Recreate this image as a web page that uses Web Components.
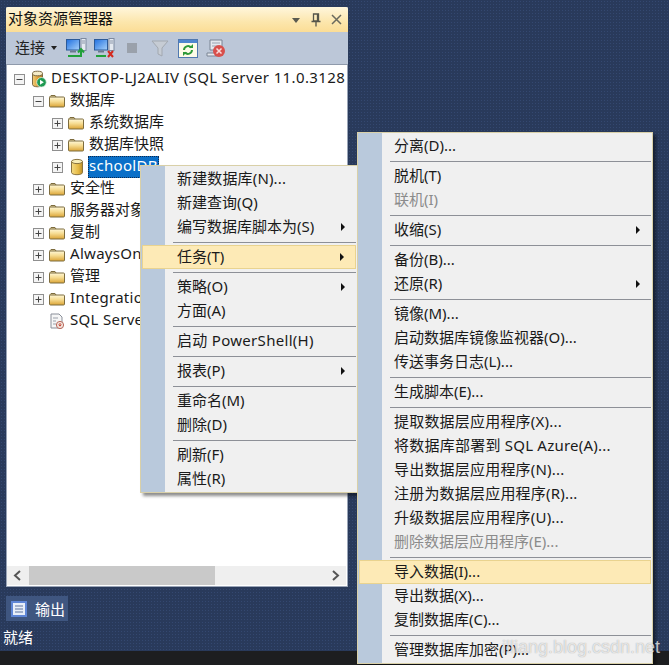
<!DOCTYPE html>
<html>
<head>
<meta charset="utf-8">
<style>
  html, body { margin: 0; height: 100%; overflow: hidden; }
  body {
    font: 15px "Noto Sans", "Noto Sans CJK SC", sans-serif;
    background-color: #2a3b5c;
  }
</style>
</head>
<body>
<ssms-window>
  <explorer-panel slot="panel">
    <tree-row icon="server" toggle="minus" level="0" style="--ls:.39px">DESKTOP-LJ2ALIV (SQL Server 11.0.3128</tree-row>
    <tree-row icon="folder" toggle="minus" level="1">数据库</tree-row>
    <tree-row icon="folder" toggle="plus" level="2">系统数据库</tree-row>
    <tree-row icon="folder" toggle="plus" level="2">数据库快照</tree-row>
    <tree-row icon="db" toggle="plus" level="2" selected style="--ls:.3px">schoolDB</tree-row>
    <tree-row icon="folder" toggle="plus" level="1">安全性</tree-row>
    <tree-row icon="folder" toggle="plus" level="1" style="--w:70px">服务器对象</tree-row>
    <tree-row icon="folder" toggle="plus" level="1">复制</tree-row>
    <tree-row icon="folder" toggle="plus" level="1" style="--ls:.3px">AlwaysOn</tree-row>
    <tree-row icon="folder" toggle="plus" level="1">管理</tree-row>
    <tree-row icon="folder" toggle="plus" level="1" style="--ls:.3px">Integratio</tree-row>
    <tree-row icon="agent" level="1" style="--ls:.3px">SQL Serve</tree-row>
  </explorer-panel>

  <ctx-menu slot="menus" style="left:140px;top:165px;width:218px">
    <menu-item style="--ls:.15px">新建数据库(N)...</menu-item>
    <menu-item>新建查询(Q)</menu-item>
    <menu-item arrow>编写数据库脚本为(S)</menu-item>
    <menu-sep></menu-sep>
    <menu-item arrow active>任务(T)</menu-item>
    <menu-sep></menu-sep>
    <menu-item arrow>策略(O)</menu-item>
    <menu-item>方面(A)</menu-item>
    <menu-sep></menu-sep>
    <menu-item style="--ls:.3px">启动 PowerShell(H)</menu-item>
    <menu-sep></menu-sep>
    <menu-item arrow>报表(P)</menu-item>
    <menu-sep></menu-sep>
    <menu-item>重命名(M)</menu-item>
    <menu-item>删除(D)</menu-item>
    <menu-sep></menu-sep>
    <menu-item>刷新(F)</menu-item>
    <menu-item>属性(R)</menu-item>
  </ctx-menu>

  <ctx-menu slot="menus" style="left:357px;top:132px;width:296px">
    <menu-item>分离(D)...</menu-item>
    <menu-sep></menu-sep>
    <menu-item>脱机(T)</menu-item>
    <menu-item disabled>联机(I)</menu-item>
    <menu-sep></menu-sep>
    <menu-item arrow>收缩(S)</menu-item>
    <menu-sep></menu-sep>
    <menu-item>备份(B)...</menu-item>
    <menu-item arrow>还原(R)</menu-item>
    <menu-sep></menu-sep>
    <menu-item>镜像(M)...</menu-item>
    <menu-item>启动数据库镜像监视器(O)...</menu-item>
    <menu-item>传送事务日志(L)...</menu-item>
    <menu-sep></menu-sep>
    <menu-item>生成脚本(E)...</menu-item>
    <menu-sep></menu-sep>
    <menu-item style="--ls:.2px">提取数据层应用程序(X)...</menu-item>
    <menu-item style="--ls:.23px">将数据库部署到 SQL Azure(A)...</menu-item>
    <menu-item style="--ls:.2px">导出数据层应用程序(N)...</menu-item>
    <menu-item style="--ls:.2px">注册为数据层应用程序(R)...</menu-item>
    <menu-item style="--ls:.2px">升级数据层应用程序(U)...</menu-item>
    <menu-item disabled>删除数据层应用程序(E)...</menu-item>
    <menu-sep></menu-sep>
    <menu-item active>导入数据(I)...</menu-item>
    <menu-item>导出数据(X)...</menu-item>
    <menu-item>复制数据库(C)...</menu-item>
    <menu-sep></menu-sep>
    <menu-item>管理数据库加密(P)...</menu-item>
  </ctx-menu>
</ssms-window>

<script>
const ICONS = {
  folder: `<svg width="16" height="14" viewBox="0 0 16 14"><defs><linearGradient id="fg" x1="0" y1="0" x2="0" y2="1"><stop offset="0" stop-color="#fff8d8"/><stop offset=".45" stop-color="#f6dc92"/><stop offset="1" stop-color="#dba436"/></linearGradient></defs><path d="M1 4V2.500l1-1h4l1 1.500" fill="#e9d9a8" stroke="#7d6c3e"/><rect x=".5" y="3" width="15" height="10" rx="1" fill="url(#fg)" stroke="#7d6c3e"/></svg>`,
  server: `<svg width="16" height="18" viewBox="0 0 16 18" style="margin-left:1px"><defs><linearGradient id="sg" x1="0" y1="0" x2="1" y2="0"><stop offset="0" stop-color="#f0cf7c"/><stop offset=".5" stop-color="#e0a23a"/><stop offset="1" stop-color="#b87a20"/></linearGradient></defs><path d="M1.500 3.500v11c0 1.400 2.400 2.300 5 2.300s5-.9 5-2.300v-11z" fill="url(#sg)" stroke="#7c6a45"/><ellipse cx="6.500" cy="3.500" rx="5" ry="2.300" fill="#f5ecc8" stroke="#7c6a45"/><circle cx="10.500" cy="12.300" r="4.800" fill="#1f9a52" stroke="#e6f4ea" stroke-width=".8"/><path d="M9 9.800l3.800 2.500L9 14.800z" fill="#fff"/></svg>`,
  db: `<svg width="14" height="18" viewBox="0 0 14 18" style="margin-left:2px"><defs><linearGradient id="dg" x1="0" y1="0" x2="1" y2="0"><stop offset="0" stop-color="#f4dc86"/><stop offset=".6" stop-color="#e7bb46"/><stop offset="1" stop-color="#bb8e28"/></linearGradient></defs><path d="M1.500 3.500v11c0 1.300 2.400 2.200 5.500 2.200s5.500-.9 5.500-2.200v-11z" fill="url(#dg)" stroke="#8a7440"/><ellipse cx="7" cy="3.500" rx="5.500" ry="2.100" fill="#f8eeb9" stroke="#8a7440"/></svg>`,
  agent: `<svg width="16" height="17" viewBox="0 0 16 17"><path d="M2 1h8l3 3v11H2z" fill="#f6f6f6" stroke="#8a8f99"/><path d="M4 5h5M4 8h3M4 11h3" stroke="#9aa0aa"/><circle cx="11" cy="12" r="3.600" fill="#f3e9e2" stroke="#b9675a"/><path d="M11 10v2.600M9.600 11.600l1.400 1.600 1.400-1.600" stroke="#c2402f" fill="none"/></svg>`
};

const MONITOR = `<defs><linearGradient id="mg" x1="0" y1="0" x2="1" y2="1"><stop offset="0" stop-color="#1f6fe0"/><stop offset="1" stop-color="#a8d2fa"/></linearGradient></defs><rect x=".5" y="1.500" width="13" height="10.500" fill="url(#mg)" stroke="#2c5a98"/><rect x="15" y=".5" width="5" height="12" fill="#e4e9f0" stroke="#7d8aa0"/><path d="M16 3h3M16 5h3" stroke="#8a96aa"/><path d="M4 12.500h6v2H4z" fill="#6c7a90"/>`;

class SsmsWindow extends HTMLElement {
  constructor() {
    super();
    this.attachShadow({ mode: "open" }).innerHTML = `
    <style>
      :host {
        display: flex;
        flex-direction: column;
        position: relative;
        width: 669px;
        height: 665px;
        color: #fff;
        background-color: #293a5b;
        background-image: radial-gradient(#344870 0.7px, transparent 0.8px);
        background-size: 3px 3px;
        overflow: hidden;
      }
      .main { padding: 7px 0 0 6px; height: 580px; }
      .tab {
        display: flex;
        align-items: center;
        gap: 8px;
        box-sizing: border-box;
        width: 62px;
        height: 25px;
        margin: 9px 0 0 6px;
        padding-left: 5px;
        background: #3f5680;
      }
      .status { height: 24px; margin-top: 4px; padding-left: 3px; line-height: 24px; }
      .strip { flex: 1; margin-top: 2px; background: #1d1e20; }
      .mark {
        position: absolute;
        right: 9px;
        bottom: 7px;
        font: 18px "Liberation Sans", sans-serif;
        color: rgba(255, 255, 255, 0.72);
        text-shadow: 0 0 1px rgba(60, 60, 60, 0.5);
      }
    </style>
    <div class="main"><slot name="panel"></slot></div>
    <div class="tab">
      <svg width="16" height="16" viewBox="0 0 16 16"><rect width="16" height="16" fill="#5f86d6"/><rect x="2" y="2" width="12" height="12" fill="#e8eef8"/><path d="M4 5h8M4 8h8M4 11h8" stroke="#8a9cbc" stroke-width="1.400"/></svg>
      <span>输出</span>
    </div>
    <div class="status">就绪</div>
    <div class="strip"></div>
    <slot name="menus"></slot>
    <div class="mark">illiang.blog.csdn.net</div>
    `;
  }
}
customElements.define("ssms-window", SsmsWindow);

class ExplorerPanel extends HTMLElement {
  constructor() {
    super();
    this.attachShadow({ mode: "open" }).innerHTML = `
    <style>
      :host {
        display: flex;
        flex-direction: column;
        box-sizing: border-box;
        width: 342px;
        height: 580px;
        background: #fff;
        color: #1a1a1a;
        border-radius: 2px 2px 0 0;
        box-shadow: 0 0 0 1px #9aa5b8 inset;
      }
      .title {
        display: flex;
        align-items: center;
        height: 25px;
        padding: 0 6px 0 2px;
        background: linear-gradient(#fff6dc, #fce6ac 60%, #fbdd96);
        color: #111;
        border-radius: 2px 2px 0 0;
      }
      .title span { flex: 1; padding-bottom: 4px; }
      .title svg { margin-left: 10px; }
      .tools {
        display: flex;
        align-items: center;
        height: 33px;
        padding-left: 9px;
        background: #bcc7d8;
        border-bottom: 1px solid #8f9aab;
        box-sizing: border-box;
      }
      .tools .connect { width: 33px; color: #222; padding-bottom: 4px; }
      .tools .caret { width: 0; height: 0; border: 3.5px solid transparent; border-top: 4px solid #222; border-bottom: 0; margin: 0 9px 0 3px; }
      .tools svg { margin-right: 7px; flex: none; }
      .tree { flex: 1; padding: 3px 0 0 1px; overflow: hidden; }
      .scroll {
        display: flex;
        align-items: center;
        height: 19px;
        margin: 0 2px 2px 1px;
        background: #efefef;
      }
      .scroll svg { flex: none; width: 22px; }
      .thumb { width: 186px; height: 19px; background: #c9c9c9; }
      .gap { flex: 1; }
    </style>
    <div class="title">
      <span>对象资源管理器</span>
      <svg width="10" height="10" viewBox="0 0 10 10"><path d="M1 3h8L5 8z" fill="#5a5a50"/></svg>
      <svg width="10" height="14" viewBox="0 0 10 14"><path d="M2.500 1h5v7h-5zM.5 8.500h9M5 8.500V13.500M6.500 1v7" stroke="#55554a" stroke-width="1.300" fill="none"/></svg>
      <svg width="11" height="11" viewBox="0 0 11 11"><path d="M1 1l9 9M10 1l-9 9" stroke="#6a6a5e" stroke-width="1.500"/></svg>
    </div>
    <div class="tools">
      <span class="connect">连接</span><span class="caret"></span>
      <svg width="21" height="20" viewBox="0 0 21 20">${MONITOR}<path d="M2 18h13v-6M12 14.500l3-3.500 3 3.500" stroke="#22a03a" stroke-width="2" fill="none"/></svg>
      <svg width="21" height="20" viewBox="0 0 21 20">${MONITOR.replace(/mg/g, "mg2")}<path d="M2 18h10" stroke="#22a03a" stroke-width="2"/><path d="M14 13l5 6M19 13l-5 6" stroke="#d42a1e" stroke-width="2"/></svg>
      <svg width="12" height="12" viewBox="0 0 12 12" style="margin:0 13px 0 4px"><rect x="1" y="1" width="10" height="10" fill="#9aa1ab"/></svg>
      <svg width="18" height="18" viewBox="0 0 18 18" style="margin-right:9px"><path d="M1 2h16l-6 7v8l-4-2V9z" fill="#c6ccd4" stroke="#a2a8b0"/></svg>
      <svg width="20" height="19" viewBox="0 0 20 19"><rect x=".5" y=".5" width="19" height="18" fill="#fdfbe8" stroke="#4f78b0"/><rect x="1" y="1" width="18" height="3" fill="#4f86d0"/><path d="M6 11a4 4 0 0 1 7-2.500M14 11a4 4 0 0 1-7 2.500" stroke="#2f9a3a" stroke-width="2" fill="none"/><path d="M11 9h4V5zM9 13H5v4z" fill="#2f9a3a"/></svg>
      <svg width="21" height="20" viewBox="0 0 21 20"><path d="M5 2h12v10H5zM2 15h12v3H2z" fill="#e4e8ee" stroke="#7b8494"/><path d="M7 5h8M7 8h6" stroke="#9aa2b0"/><circle cx="14" cy="13" r="6" fill="#d8504c"/><path d="M11.500 10.500l5 5M16.500 10.500l-5 5" stroke="#fbdcdc" stroke-width="1.500"/></svg>
    </div>
    <div class="tree"><slot></slot></div>
    <div class="scroll">
      <svg height="13" viewBox="0 0 22 13"><path d="M13 2l-5 4.500 5 4.500" stroke="#555" stroke-width="2" fill="none"/></svg>
      <div class="thumb"></div>
      <div class="gap"></div>
      <svg height="13" viewBox="0 0 22 13"><path d="M9 2l5 4.500-5 4.500" stroke="#555" stroke-width="2" fill="none"/></svg>
    </div>
    `;
  }
}
customElements.define("explorer-panel", ExplorerPanel);

class TreeRow extends HTMLElement {
  constructor() {
    super();
    const toggle = this.getAttribute("toggle");
    const level = Number(this.getAttribute("level") || 0);
    const box = toggle ? `<svg width="11" height="11" viewBox="0 0 11 11"><rect x=".5" y=".5" width="10" height="10" fill="#f4f4f4" stroke="#8f8f8f"/><path d="M2.500 5.500h6${toggle === "plus" ? "M5.500 2.500v6" : ""}" stroke="#444"/></svg>` : "";
    this.attachShadow({ mode: "open" }).innerHTML = `
    <style>
      :host {
        display: flex;
        align-items: center;
        height: 22px;
        white-space: nowrap;
        padding-left: ${7 + level * 19}px;
      }
      .tog { width: 16px; flex: none; display: flex; align-items: center; }
      .ico { width: 20px; flex: none; display: flex; align-items: center; }
      .txt {
        display: block;
        height: 22px;
        line-height: 18px;
        padding: 0 1px;
        letter-spacing: var(--ls, 0);
        max-width: var(--w, none);
        overflow: hidden;
      }
      :host([selected]) .txt { background: #0a6fc8; color: #fff; outline: 1px dotted #0d2a50; outline-offset: -1px; }
    </style>
    <span class="tog">${box}</span>
    <span class="ico">${ICONS[this.getAttribute("icon")]}</span>
    <span class="txt"><slot></slot></span>
    `;
  }
}
customElements.define("tree-row", TreeRow);

class CtxMenu extends HTMLElement {
  constructor() {
    super();
    this.attachShadow({ mode: "open" }).innerHTML = `
    <style>
      :host {
        display: block;
        position: absolute;
        box-sizing: border-box;
        padding: 1px 0;
        border: 1px solid #d9d0a8;
        color: #1a1a1a;
        background: linear-gradient(to right, #b9c9dc 24px, #f0f0f0 24px);
        box-shadow: 3px 3px 3px rgba(0, 0, 0, 0.45);
      }
    </style>
    <slot></slot>
    `;
  }
}
customElements.define("ctx-menu", CtxMenu);

class MenuItem extends HTMLElement {
  constructor() {
    super();
    this.attachShadow({ mode: "open" }).innerHTML = `
    <style>
      :host {
        display: flex;
        align-items: center;
        justify-content: space-between;
        box-sizing: border-box;
        height: 24px;
        padding: 0 12px 0 36px;
        white-space: nowrap;
      }
      :host([disabled]) { color: #8b8b8b; }
      :host([active]) {
        margin: 0 1px;
        padding-left: 34px;
        padding-right: 11px;
        background: #fdeab6;
        border: 1px solid #e9d38f;
      }
      span { padding-bottom: 4px; letter-spacing: var(--ls, 0); }
      i { display: none; width: 0; height: 0; border: 4px solid transparent; border-left: 4px solid #111; border-right: 0; }
      :host([arrow]) i { display: block; }
    </style>
    <span><slot></slot></span><i></i>
    `;
  }
}
customElements.define("menu-item", MenuItem);

class MenuSep extends HTMLElement {
  constructor() {
    super();
    this.attachShadow({ mode: "open" }).innerHTML = `
    <style>
      :host {
        display: flex;
        align-items: center;
        height: 6px;
        padding: 0 1px 0 32px;
      }
      div { flex: 1; height: 1px; background: #8d9097; }
    </style>
    <div></div>
    `;
  }
}
customElements.define("menu-sep", MenuSep);
</script>
</body>
</html>
